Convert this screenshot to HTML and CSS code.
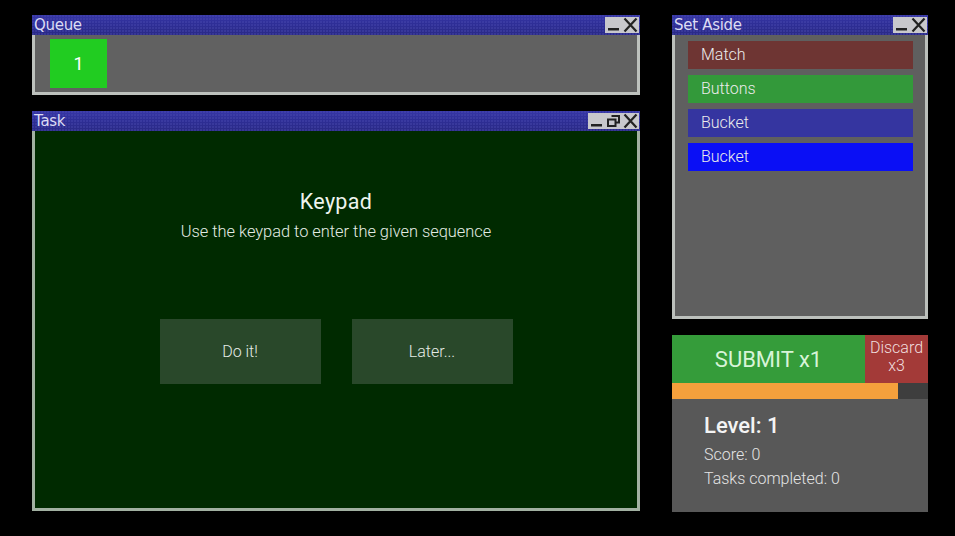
FILE: index.html
```html
<!DOCTYPE html>
<html>
<head>
<meta charset="utf-8">
<link rel="stylesheet" href="styles.css">
</head>
<body>
<div class="screen">
  <div class="col-left">
    <div class="window queue">
      <div class="titlebar">
        <span class="title">Queue</span>
        <div class="tbtns">
          <span class="tbtn"><svg viewBox="0 0 17 16" width="17" height="16"><rect x="3" y="11" width="11" height="2.5" fill="#222"/></svg></span>
          <span class="tbtn"><svg viewBox="0 0 17 16" width="17" height="16"><path d="M2.5 1.5 L14.5 14.5 M14.5 1.5 L2.5 14.5" stroke="#222" stroke-width="2.2" fill="none"/></svg></span>
        </div>
      </div>
      <div class="wbody queue-body">
        <div class="qitem">1</div>
      </div>
    </div>
    <div class="window task">
      <div class="titlebar">
        <span class="title">Task</span>
        <div class="tbtns">
          <span class="tbtn"><svg viewBox="0 0 17 16" width="17" height="16"><rect x="3" y="11" width="11" height="2.5" fill="#222"/></svg></span>
          <span class="tbtn"><svg viewBox="0 0 17 16" width="17" height="16"><path d="M6.5 3 H14 V9.5 H11 M3 6.5 H10.5 V13 H3 Z" stroke="#222" stroke-width="2" fill="none"/></svg></span>
          <span class="tbtn"><svg viewBox="0 0 17 16" width="17" height="16"><path d="M2.5 1.5 L14.5 14.5 M14.5 1.5 L2.5 14.5" stroke="#222" stroke-width="2.2" fill="none"/></svg></span>
        </div>
      </div>
      <div class="wbody task-body">
        <h1 class="task-title">Keypad</h1>
        <p class="task-desc">Use the keypad to enter the given sequence</p>
        <div class="task-actions">
          <button class="tbutton">Do it!</button>
          <button class="tbutton">Later...</button>
        </div>
      </div>
    </div>
  </div>
  <div class="col-right">
    <div class="window aside">
      <div class="titlebar">
        <span class="title">Set Aside</span>
        <div class="tbtns">
          <span class="tbtn"><svg viewBox="0 0 17 16" width="17" height="16"><rect x="3" y="11" width="11" height="2.5" fill="#222"/></svg></span>
          <span class="tbtn"><svg viewBox="0 0 17 16" width="17" height="16"><path d="M2.5 1.5 L14.5 14.5 M14.5 1.5 L2.5 14.5" stroke="#222" stroke-width="2.2" fill="none"/></svg></span>
        </div>
      </div>
      <div class="wbody aside-body">
        <div class="aitem match">Match</div>
        <div class="aitem buttons">Buttons</div>
        <div class="aitem bucket1">Bucket</div>
        <div class="aitem bucket2">Bucket</div>
      </div>
    </div>
    <div class="panel">
      <div class="actions">
        <button class="submit">SUBMIT x1</button>
        <button class="discard">Discard<br>x3</button>
      </div>
      <div class="progress"><div class="progress-fill" style="width:88.3%"></div></div>
      <div class="stats">
        <div class="level">Level: 1</div>
        <div class="stat">Score: 0</div>
        <div class="stat">Tasks completed: 0</div>
      </div>
    </div>
  </div>
</div>
</body>
</html>
```

FILE: styles.css
```css
html, body {
  margin: 0;
  padding: 0;
  background: #000;
  font-family: Roboto, "Liberation Sans", sans-serif;
  font-weight: 300;
  color: #e8e8e8;
}
.screen {
  width: 955px;
  height: 536px;
  box-sizing: border-box;
  padding: 15px 0 0 32px;
  display: flex;
  gap: 32px;
}
.col-left {
  width: 608px;
  display: flex;
  flex-direction: column;
  gap: 16px;
}
.col-right {
  width: 256px;
  display: flex;
  flex-direction: column;
  gap: 16px;
}
.window {
  display: flex;
  flex-direction: column;
}
.titlebar {
  height: 20px;
  background-color: #2e2e92;
  background-image:
    radial-gradient(circle at 1px 1px, rgba(80,80,180,0.35) 0.8px, transparent 1.2px),
    linear-gradient(#3636a6, #2e2e96 45%, #2a2a86);
  background-size: 3px 3px, 100% 100%;
  display: flex;
  align-items: center;
  justify-content: space-between;
  flex-shrink: 0;
}
.title {
  font-family: "DejaVu Sans", Roboto, sans-serif;
  font-weight: 400;
  font-size: 15px;
  color: #dcdcf4;
  padding-left: 2px;
  letter-spacing: -0.3px;
}
.tbtns {
  display: flex;
  padding-right: 1px;
}
.tbtn {
  width: 17px;
  height: 16px;
  background: #c8c8cc;
  display: block;
}
.tbtn svg { display: block; }
.wbody {
  border: 3px solid rgba(225,230,225,0.72);
  border-top: 0;
  flex: 1;
}
.queue-body {
  background: #616161;
  height: 60px;
  flex: none;
  box-sizing: border-box;
  padding: 4px 0 0 15px;
}
.qitem {
  width: 57px;
  height: 49px;
  background: #21cc21;
  color: #fff;
  font-size: 18px;
  font-weight: 400;
  display: flex;
  align-items: center;
  justify-content: center;
}
.task { height: 400px; }
.task-body {
  background: #002a00;
  display: flex;
  flex-direction: column;
  align-items: center;
  padding-top: 58px;
}
.task-title {
  margin: 0;
  font-size: 21.5px;
  font-weight: 400;
  line-height: 26px;
  color: #eef4ee;
  letter-spacing: 0.3px;
}
.task-desc {
  margin: 6px 0 0;
  font-size: 16.4px;
  line-height: 22px;
  color: #e4ece4;
}
.task-actions {
  display: flex;
  gap: 31px;
  margin-top: 76px;
}
.tbutton {
  width: 161px;
  height: 65px;
  border: 0;
  background: #29482a;
  color: #e6ece6;
  font-family: Roboto, "Liberation Sans", sans-serif;
  font-weight: 300;
  font-size: 16px;
  padding: 0;
}
.aside { height: 304px; }
.aside-body {
  background: #5f5f5f;
  display: flex;
  flex-direction: column;
  gap: 6px;
  padding: 6px 12px 0 13px;
}
.aitem {
  height: 28px;
  line-height: 28px;
  padding-left: 13px;
  font-size: 16px;
  color: #ececec;
}
.match { background: #6e3533; }
.buttons { background: #33993a; }
.bucket1 { background: #3535a0; }
.bucket2 { background: #0a0ff5; }
.panel {
  height: 177px;
  display: flex;
  flex-direction: column;
}
.actions {
  display: flex;
  height: 48px;
}
.submit {
  flex: 1;
  border: 0;
  background: #359c3a;
  color: #d8f4d8;
  font-family: Roboto, "Liberation Sans", sans-serif;
  font-weight: 400;
  font-size: 22px;
  padding: 0;
}
.discard {
  width: 63px;
  border: 0;
  background: #a33a38;
  color: #f0dede;
  font-family: Roboto, "Liberation Sans", sans-serif;
  font-weight: 300;
  font-size: 16px;
  line-height: 18px;
  padding: 0 0 4px;
}
.progress {
  height: 16px;
  background: #3e3e3e;
}
.progress-fill {
  height: 100%;
  background: #f5a03c;
}
.stats {
  flex: 1;
  background: #585858;
  padding: 13px 0 0 32px;
}
.level {
  font-size: 22px;
  font-weight: 500;
  line-height: 28px;
  color: #f4f4f4;
}
.stat {
  font-size: 16px;
  line-height: 24px;
  color: #e4e4e4;
}
.stats .level + .stat { margin-top: 3px; }
```
